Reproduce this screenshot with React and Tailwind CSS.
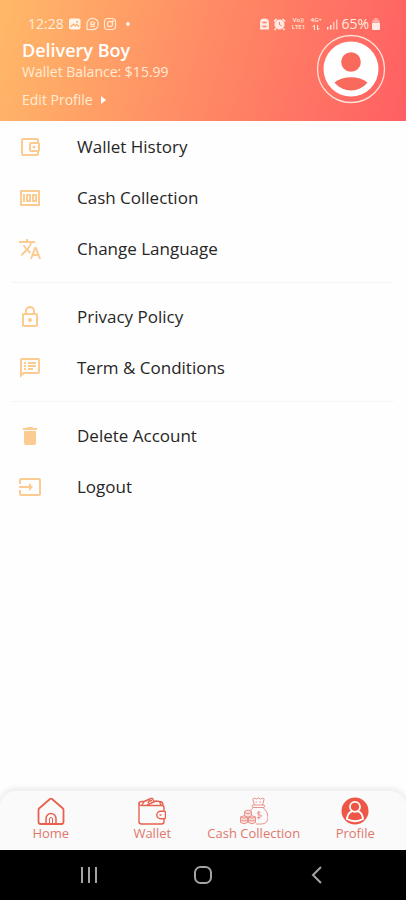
import {
  MdDelete,
  MdInput,
  MdLockOutline,
  MdMoney,
  MdOutlineAccountBalanceWallet,
  MdOutlineSpeakerNotes,
  MdTranslate,
} from "react-icons/md";

const menuGroups = [
  [
    { label: "Wallet History", icon: MdOutlineAccountBalanceWallet },
    { label: "Cash Collection", icon: MdMoney },
    { label: "Change Language", icon: MdTranslate },
  ],
  [
    { label: "Privacy Policy", icon: MdLockOutline },
    { label: "Term & Conditions", icon: MdOutlineSpeakerNotes },
  ],
  [
    { label: "Delete Account", icon: MdDelete },
    { label: "Logout", icon: MdInput },
  ],
];

const tabs = [
  { label: "Home", icon: HomeIcon },
  { label: "Wallet", icon: WalletIcon },
  { label: "Cash Collection", icon: MoneyBagIcon },
  { label: "Profile", icon: ProfileIcon },
];

function HomeIcon() {
  return (
    <svg viewBox="0 0 28 28" className="size-7" fill="none" stroke="#e8604f" strokeWidth="1.8" strokeLinejoin="round">
      <path d="M1.500 13q0-1 .8-1.700L13 2q1-.8 2 0l10.700 9.300q.8.700.8 1.700V24.500q0 2.500-2 2.500H3.500q-2 0-2-2.500Z" />
      <path d="M9 27V21.500a5 5 0 0 1 10 0V27" strokeWidth="1.500" />
      <path d="M12.500 27V22a1.500 1.500 0 0 1 3 0V27" strokeWidth="1" />
    </svg>
  );
}

function WalletIcon() {
  return (
    <svg viewBox="0 0 28 28" className="size-7" fill="none" stroke="#e8604f" strokeWidth="1.4" strokeLinejoin="round">
      <path d="M26 14.500V10.500q0-2-2-2H3.500q-2.500 0-2.500-2.500V24.500q0 2.500 2.500 2.500H23.500q2.500 0 2.500-2.500V21.500" />
      <path d="M1 6.500Q1 4.500 4 4.500H7M4 8 6 4.500 13 1.500q1.500-.5 2 1L16 4.500M9 8 18 4l3.500.5L23 8M10 6q.5-2.500 4-2.500M21.500 4.500Q25 4.500 25 8" />
      <path d="M27.500 14.800 26 14.300H22.500a3.700 3.700 0 0 0 0 7.400H26l1.500-.5Z" />
      <path d="M21.500 18h2" />
    </svg>
  );
}

function MoneyBagIcon() {
  return (
    <svg viewBox="0 0 28 28" className="size-7" fill="none" stroke="#e9928b" strokeWidth="1" strokeLinejoin="round">
      <path d="M14.500 8 12.800 2.500q0-1.500 1.700-1.300l2 .8 2-1.200 2 1.200 2.300-.8q1.500 0 1.200 1.500L22.500 8" />
      <path d="M12.500 8h11.500q1.200 1.200 0 2.500H12.500q-1.200-1.200 0-2.500ZM15.500 5h1.500M19.500 5H21" />
      <path d="M13.500 10.500Q11 12 10.500 14M23 10.500Q28 14.500 28 20q0 7-6.500 7H16" />
      <path d="M20.500 15.500q-3-1.300-3 .7t3 2-1.500 2.900l-2-.7M18.800 14v8.500" />
      <g fill="#f9e0dd">
        <ellipse cx="8" cy="15" rx="3.500" ry="1.800" />
        <path d="M4.500 15v4q3.500 3 7 0V15q-3.500 3.500-7 0Z" />
        <path d="M.5 20v5.500q3.500 2.500 7 0V20q-3.500-2.500-7 0ZM8.500 20v5.500q3.500 2.500 7 0V20q-3.500-2.500-7 0Z" />
      </g>
      <path d="M.5 20q3.500 2.500 7 0M.5 22.800q3.500 2.500 7 0M8.500 20q3.500 2.500 7 0M8.500 22.800q3.500 2.500 7 0" />
    </svg>
  );
}

function ProfileIcon() {
  return (
    <svg viewBox="0 0 28 28" className="size-7">
      <circle cx="14" cy="14" r="13.500" fill="#ee5748" />
      <g fill="none" stroke="#fff" strokeWidth="1.800">
        <circle cx="14" cy="9.800" r="5" />
        <path d="M6 23C6 18 8.500 15.200 11 14.300M17 14.300C19.500 15.200 22 18 22 23M6 22q8 4.500 16 0" />
      </g>
    </svg>
  );
}

function NotificationIcons() {
  return (
    <svg viewBox="0 0 66 14" className="h-3.5 w-[66px]" fill="none" stroke="#ffe9d2" strokeWidth="1.200">
      <rect x="1" y="1.500" width="11.500" height="11" rx="2" fill="#fff5e8" stroke="none" />
      <path d="m2.500 10 3-3 2 2 1.500-1.500L11 10" stroke="#ffad68" />
      <circle cx="9" cy="4.800" r="1" fill="#ffad68" stroke="none" />
      <path d="M19 12.500V7a5.700 5.700 0 1 1 5.700 5.700Z" />
      <path d="M23 9.500V5h2.500a1.200 1.200 0 0 1 0 2.400H23h3v2.100Z" />
      <rect x="36.500" y="1.500" width="11" height="11" rx="3.200" />
      <circle cx="42" cy="7" r="2.600" />
      <circle cx="45" cy="4" r=".5" />
      <circle cx="60" cy="7" r="1.900" fill="#fff5e8" stroke="none" />
    </svg>
  );
}

function AlarmIcons() {
  return (
    <svg viewBox="0 0 28 14" className="h-3.5 w-7" fill="#ffe9e2">
      <path d="M1 5.500Q1 1.500 5.500 1.500T10 5.500V12.500H1Z" />
      <path d="M3.500 5.500h4M3.500 9.500h4" stroke="#ff8064" strokeWidth="1.300" />
      <circle cx="20.500" cy="7.500" r="5" />
      <path d="m15 4.500 2.500-2.500M26 4.500 23.500 2M17 11.500l-1.500 1.500M24 11.500l1.500 1.500" stroke="#ffe9e2" strokeWidth="1.600" />
      <path d="M20.500 5v2.800l2 1" stroke="#ff7c64" strokeWidth="1" fill="none" />
    </svg>
  );
}

function SignalBars() {
  return (
    <svg viewBox="0 0 12 12" className="size-3" fill="#ffe9e2">
      <path d="M1 9h1.500v2.500H1ZM4 7h1.500v4.500H4Z" />
      <path d="M7 4h1.500v7.500H7ZM10 1.500h1.500v10H10Z" opacity=".7" />
    </svg>
  );
}

function StatusBar() {
  return (
    <div className="flex h-5 items-center justify-between pr-1.5 pl-1.5 text-sm text-[#ffeedd]">
      <div className="flex items-center gap-1">
        <span>12:28</span>
        <NotificationIcons />
      </div>
      <div className="flex items-center gap-[3px]">
        <AlarmIcons />
        <div className="flex w-4 flex-col items-center text-[6px] leading-[7px] font-semibold">
          <span>Vo))</span>
          <span>LTE1</span>
        </div>
        <div className="flex w-3.5 flex-col items-center text-[6px] leading-[7px] font-semibold">
          <span>4G+</span>
          <svg viewBox="0 0 8 7" className="h-[7px] w-2" fill="none" stroke="currentColor">
            <path d="M2.500 6V1L.5 3M5.500 1v5l2-2" />
          </svg>
        </div>
        <SignalBars />
        <span>65%</span>
        <svg viewBox="0 0 8 12" className="h-3 w-2" fill="#ffe9e2">
          <path d="M0 5h8v6q0 1-1 1H1q-1 0-1-1Z" />
          <path d="M.5 5V2.500q0-1 1-1h1V0h3v1.500h1q1 0 1 1V5" opacity=".5" />
        </svg>
      </div>
    </div>
  );
}

function Avatar() {
  return (
    <svg viewBox="0 0 70 70" className="size-[70px]">
      <circle cx="35" cy="35" r="33.500" fill="none" stroke="#ffe2d8" strokeWidth="1.300" />
      <circle cx="35" cy="35" r="27.500" fill="#fff" />
      <circle cx="35" cy="28" r="9.800" fill="#f9695c" />
      <path d="M18.500 48.500C27 41.500 43 41.500 51.500 48.500C43 59 27 59 18.500 48.500Z" fill="#f9695c" />
    </svg>
  );
}

function Header() {
  return (
    <header className="bg-linear-[105deg,#ffb968_0%,#ff8c65_48%,#ff5f63_100%] pt-3.5 pr-5 pb-[11px] pl-[22px]">
      <StatusBar />
      <div className="flex items-start justify-between">
        <div className="pt-1 text-[#ffecd5]">
          <h1 className="text-lg leading-6 font-semibold text-white">Delivery Boy</h1>
          <p className="text-sm leading-5">Wallet Balance: $15.99</p>
          <a href="#edit-profile" className="mt-2 flex items-center gap-2 text-sm leading-5">
            Edit Profile
            <svg viewBox="0 0 5 8" className="h-2 w-[5px]" fill="#fff">
              <path d="M0 0 5 4 0 8Z" />
            </svg>
          </a>
        </div>
        <Avatar />
      </div>
    </header>
  );
}

function MenuItem({ label, icon: Icon }) {
  return (
    <li>
      <button type="button" className="flex h-[51px] w-full items-center gap-[35px] px-[18px] text-left text-[17px] text-[#262626]">
        <Icon className="size-6 text-[#fccb91]" />
        {label}
      </button>
    </li>
  );
}

function TabBar() {
  return (
    <nav className="grid grid-cols-4 rounded-t-2xl bg-[#fafafa] pt-1.5 pb-[9px] shadow-[0_-2px_4px_2px_rgba(0,0,0,0.06)]">
      {tabs.map(({ label, icon: Icon }) => (
        <a key={label} href="#tab" className="flex flex-col items-center text-[13px] leading-4 whitespace-nowrap text-[#e0776c]">
          <Icon />
          {label}
        </a>
      ))}
    </nav>
  );
}

function SystemBar() {
  return (
    <div className="flex h-[50px] items-center justify-around bg-black px-8 text-[#a3a3a3]">
      <button type="button" aria-label="Recent apps">
        <svg viewBox="0 0 18 18" className="size-[18px]" stroke="currentColor" strokeWidth="2">
          <path d="M2 1v16M9 1v16M16 1v16" />
        </svg>
      </button>
      <button type="button" aria-label="Home">
        <svg viewBox="0 0 18 18" className="size-[18px]" fill="none" stroke="currentColor" strokeWidth="2">
          <rect x="1" y="1" width="16" height="16" rx="5.500" />
        </svg>
      </button>
      <button type="button" aria-label="Back">
        <svg viewBox="0 0 18 18" className="size-[18px]" fill="none" stroke="currentColor" strokeWidth="2">
          <path d="M13 1 5 9l8 8" />
        </svg>
      </button>
    </div>
  );
}

export default function App() {
  return (
    <div className="flex min-h-screen flex-col bg-[#fefefe] font-['Open_Sans',sans-serif]">
      <Header />
      <main className="flex-1">
        {menuGroups.map((group, index) => (
          <div key={group[0].label}>
            {index > 0 && <hr className="mx-3 my-2 border-[#f5f5f5]" />}
            <ul>
              {group.map((item) => (
                <MenuItem key={item.label} {...item} />
              ))}
            </ul>
          </div>
        ))}
      </main>
      <TabBar />
      <SystemBar />
    </div>
  );
}
